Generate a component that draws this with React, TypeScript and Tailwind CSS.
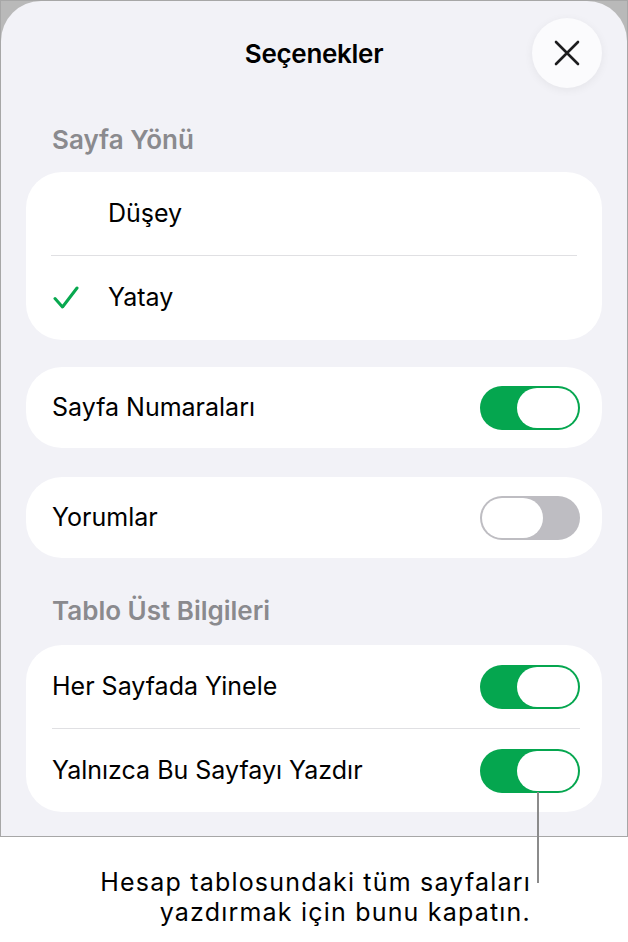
import React from "react";

const FONT = { fontFamily: "Inter, 'Noto Sans', 'Liberation Sans', sans-serif" };

function Toggle({ on }: { on: boolean }) {
  return (
    <div
      className={
        "flex h-[44px] w-[100px] items-center rounded-full p-[2px] " +
        (on ? "justify-end bg-[#05a64f]" : "justify-start bg-[#bebdc2]")
      }
    >
      <div className="h-[40px] w-[61px] rounded-full bg-white" />
    </div>
  );
}

function Check() {
  return (
    <svg width="26" height="24" viewBox="0 0 26 24" fill="none">
      <path d="M2 12.5 L9.5 21 L24 2" stroke="#08a84f" strokeWidth="3" strokeLinecap="round" strokeLinejoin="round" />
    </svg>
  );
}

function CloseIcon() {
  return (
    <svg width="26" height="26" viewBox="0 0 26 26" fill="none">
      <path d="M2 2 L24 24 M24 2 L2 24" stroke="#1c1c1e" strokeWidth="2.6" strokeLinecap="round" />
    </svg>
  );
}

export default function App() {
  return (
    <div className="relative h-[942px] w-[628px] bg-white text-black" style={FONT}>
      <div className="h-[837px] border border-[#a7a7a7] bg-[#b9b9b9]">
        <div className="h-full rounded-t-[40px] bg-[#f2f2f7] px-[25px] pt-[17px]">
          {/* header */}
          <div className="flex h-[70px] items-center justify-between">
            <div className="w-[70px]" />
            <h1 className="text-[26px] font-semibold tracking-[-0.3px]">Seçenekler</h1>
            <button className="flex h-[70px] w-[70px] items-center justify-center rounded-full bg-[#fbfbfd] shadow-[0_2px_10px_rgba(0,0,0,0.06)]">
              <CloseIcon />
            </button>
          </div>

          <div className="mt-[39px] px-[26px] text-[26px] font-semibold leading-[26px] text-[#8a8a8e]">Sayfa Yönü</div>

          <div className="mt-[19px] rounded-[36px] bg-white pl-[25px] pr-[25px]">
            <div className="flex h-[84px] items-center border-b border-[#e0e0e3] pl-[57px] text-[25px]">Düşey</div>
            <div className="flex h-[84px] items-center text-[25px]">
              <div className="flex w-[57px] items-center pl-[2px]">
                <Check />
              </div>
              <span>Yatay</span>
            </div>
          </div>

          <div className="mt-[27px] flex h-[81px] items-center justify-between rounded-[36px] bg-white pl-[26px] pr-[22px]">
            <span className="text-[25px]">Sayfa Numaraları</span>
            <Toggle on />
          </div>

          <div className="mt-[29px] flex h-[81px] items-center justify-between rounded-[36px] bg-white pl-[26px] pr-[22px]">
            <span className="text-[25px]">Yorumlar</span>
            <Toggle on={false} />
          </div>

          <div className="mt-[40px] px-[26px] text-[26px] font-semibold leading-[26px] text-[#8a8a8e]">Tablo Üst Bilgileri</div>

          <div className="mt-[21px] rounded-[36px] bg-white pl-[26px] pr-[22px]">
            <div className="flex h-[84px] items-center justify-between border-b border-[#e0e0e3]">
              <span className="text-[25px]">Her Sayfada Yinele</span>
              <Toggle on />
            </div>
            <div className="flex h-[83px] items-center justify-between">
              <span className="text-[25px]">Yalnızca Bu Sayfayı Yazdır</span>
              <Toggle on />
            </div>
          </div>
        </div>
      </div>

      <div className="mt-[30px] w-[531px] text-right text-[25px] leading-[30px] tracking-[1.2px]">
        Hesap tablosundaki tüm sayfaları
        <br />
        yazdırmak için bunu kapatın.
      </div>

      {/* callout line */}
      <div className="absolute left-[537px] top-[792px] h-[91px] w-[2px] bg-[#8b8b8b]" />
    </div>
  );
}
